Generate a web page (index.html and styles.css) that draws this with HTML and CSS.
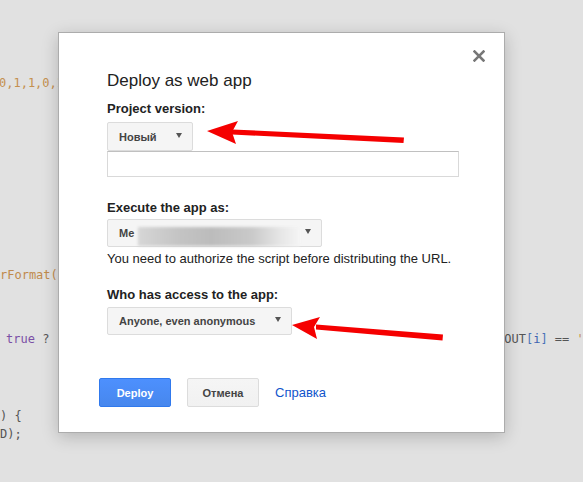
FILE: index.html
```html
<!DOCTYPE html>
<html>
<head>
<meta charset="utf-8">
<link rel="stylesheet" href="styles.css">
</head>
<body>
<div class="code">
  <span class="ln ln1 num">0,1,1,0,1</span>
  <span class="ln ln2 fn">rFormat(</span>
  <span class="ln ln3"><span class="kw">true</span> ?</span>
  <span class="ln ln4">) {</span>
  <span class="ln ln5">D);</span>
  <span class="ln ln6">DOUT<span class="br">[</span><span class="var">i</span><span class="br">]</span> == <span class="num">'</span></span>
</div>

<div class="dialog">
  <button class="close" aria-label="Close">
    <svg width="12" height="12" viewBox="0 0 12 12"><path d="M1.5 1.5 L10.5 10.5 M10.5 1.5 L1.5 10.5" stroke="#777" stroke-width="2.5" stroke-linecap="square"/></svg>
  </button>
  <div class="content">
    <h1 class="title">Deploy as web app</h1>
    <div class="label l1">Project version:</div>
    <div class="select s1"><span>Новый</span><i class="caret"></i></div>
    <div class="input"></div>
    <div class="label l2">Execute the app as:</div>
    <div class="select s2"><span>Me</span><span class="blur"></span><i class="caret"></i></div>
    <div class="note">You need to authorize the script before distributing the URL.</div>
    <div class="label l3">Who has access to the app:</div>
    <div class="select s3"><span>Anyone, even anonymous</span><i class="caret"></i></div>
  </div>
  <div class="footer">
    <button class="btn primary">Deploy</button>
    <button class="btn">Отмена</button>
    <a class="help">Справка</a>
  </div>
</div>

<svg class="arrows" width="583" height="482" viewBox="0 0 583 482">
  <g fill="#f50000">
    <polygon points="232,129.5 404,137.5 403.5,143 232,134.5"/>
    <polygon points="207,131 238,121 232,132 236,144"/>
    <polygon points="316,324.5 443,334.5 442.5,340.5 316,329.5"/>
    <polygon points="292,325 320,317 314,327 317,339"/>
  </g>
</svg>
</body>
</html>
```
FILE: styles.css
```css
html, body {
  margin: 0;
  padding: 0;
}
body {
  width: 583px;
  height: 482px;
  overflow: hidden;
  position: relative;
  background: #e1e1e1;
  font-family: "Liberation Sans", Arial, sans-serif;
}

.code {
  font-family: "DejaVu Sans Mono", monospace;
  font-size: 12px;
  color: #555;
}
.ln {
  position: absolute;
  line-height: 16px;
  white-space: pre;
}
.ln1 { left: -1px; top: 75px; }
.ln2 { left: 0; top: 267px; }
.ln3 { left: 6px; top: 331px; }
.ln4 { left: 0; top: 408px; }
.ln5 { left: 0; top: 426px; }
.ln6 { left: 497px; top: 331px; }
.num { color: #c4904f; }
.fn { color: #c08a4c; }
.kw { color: #7b4fa6; }
.br { color: #4a74b8; }
.var { color: #3d63b0; }

.dialog {
  position: absolute;
  left: 58px;
  top: 32px;
  width: 447px;
  height: 401px;
  box-sizing: border-box;
  background: #fff;
  border: 1px solid #acacac;
  box-shadow: 0 4px 16px rgba(0, 0, 0, 0.2);
}
.close {
  position: absolute;
  right: 19px;
  top: 17px;
  width: 12px;
  height: 12px;
  padding: 0;
  border: 0;
  background: none;
  display: block;
}
.close svg { display: block; }

.content {
  padding: 38px 0 0 48px;
}
.title {
  margin: 0;
  font-size: 17px;
  font-weight: normal;
  line-height: 20px;
  color: #222;
}
.label {
  font-size: 13px;
  font-weight: bold;
  line-height: 16px;
  color: #222;
}
.l1 { margin-top: 10px; margin-bottom: 5px; }
.l2 { margin-top: 23px; margin-bottom: 3px; }
.l3 { margin-top: 20px; margin-bottom: 4px; }

.select {
  box-sizing: border-box;
  height: 28px;
  display: flex;
  align-items: center;
  padding: 0 10px 0 11px;
  background: #f5f5f5;
  border: 1px solid #dcdcdc;
  border-radius: 2px;
  font-size: 11px;
  font-weight: bold;
  color: #444;
  position: relative;
}
.select .caret {
  margin-left: auto;
  width: 0;
  height: 0;
  border-left: 3px solid transparent;
  border-right: 3px solid transparent;
  border-top: 5px solid #555;
  margin-top: -3px;
}
.s1 { width: 86px; height: 29px; }
.s2 { width: 215px; }
.s3 { width: 185px; }
.blur {
  position: absolute;
  left: 30px;
  top: 7px;
  width: 162px;
  height: 19px;
  background: linear-gradient(90deg, #d6d6d6 0%, #c4c4c4 25%, #bcbcbc 45%, #c9c9c9 70%, #e6e6e6 88%, #f5f5f5 100%);
  filter: blur(1.5px);
}

.input {
  box-sizing: border-box;
  width: 352px;
  height: 26px;
  border: 1px solid #d9d9d9;
  border-top-color: #c0c0c0;
  background: #fff;
}

.note {
  margin-top: 4px;
  font-size: 13px;
  line-height: 16px;
  color: #222;
}

.footer {
  display: flex;
  align-items: center;
  gap: 16px;
  padding: 43px 0 0 40px;
}
.btn {
  box-sizing: border-box;
  width: 72px;
  height: 29px;
  padding: 0;
  border: 1px solid #dcdcdc;
  border-radius: 2px;
  background: linear-gradient(#f5f5f5, #f1f1f1);
  font-family: "Liberation Sans", Arial, sans-serif;
  font-size: 11px;
  font-weight: bold;
  color: #444;
}
.primary {
  background: linear-gradient(#4d90fe, #4787ed);
  border-color: #3079ed;
  color: #fff;
}
.help {
  font-size: 13px;
  color: #1155cc;
  line-height: 16px;
}

.arrows {
  position: absolute;
  left: 0;
  top: 0;
  pointer-events: none;
}
```
